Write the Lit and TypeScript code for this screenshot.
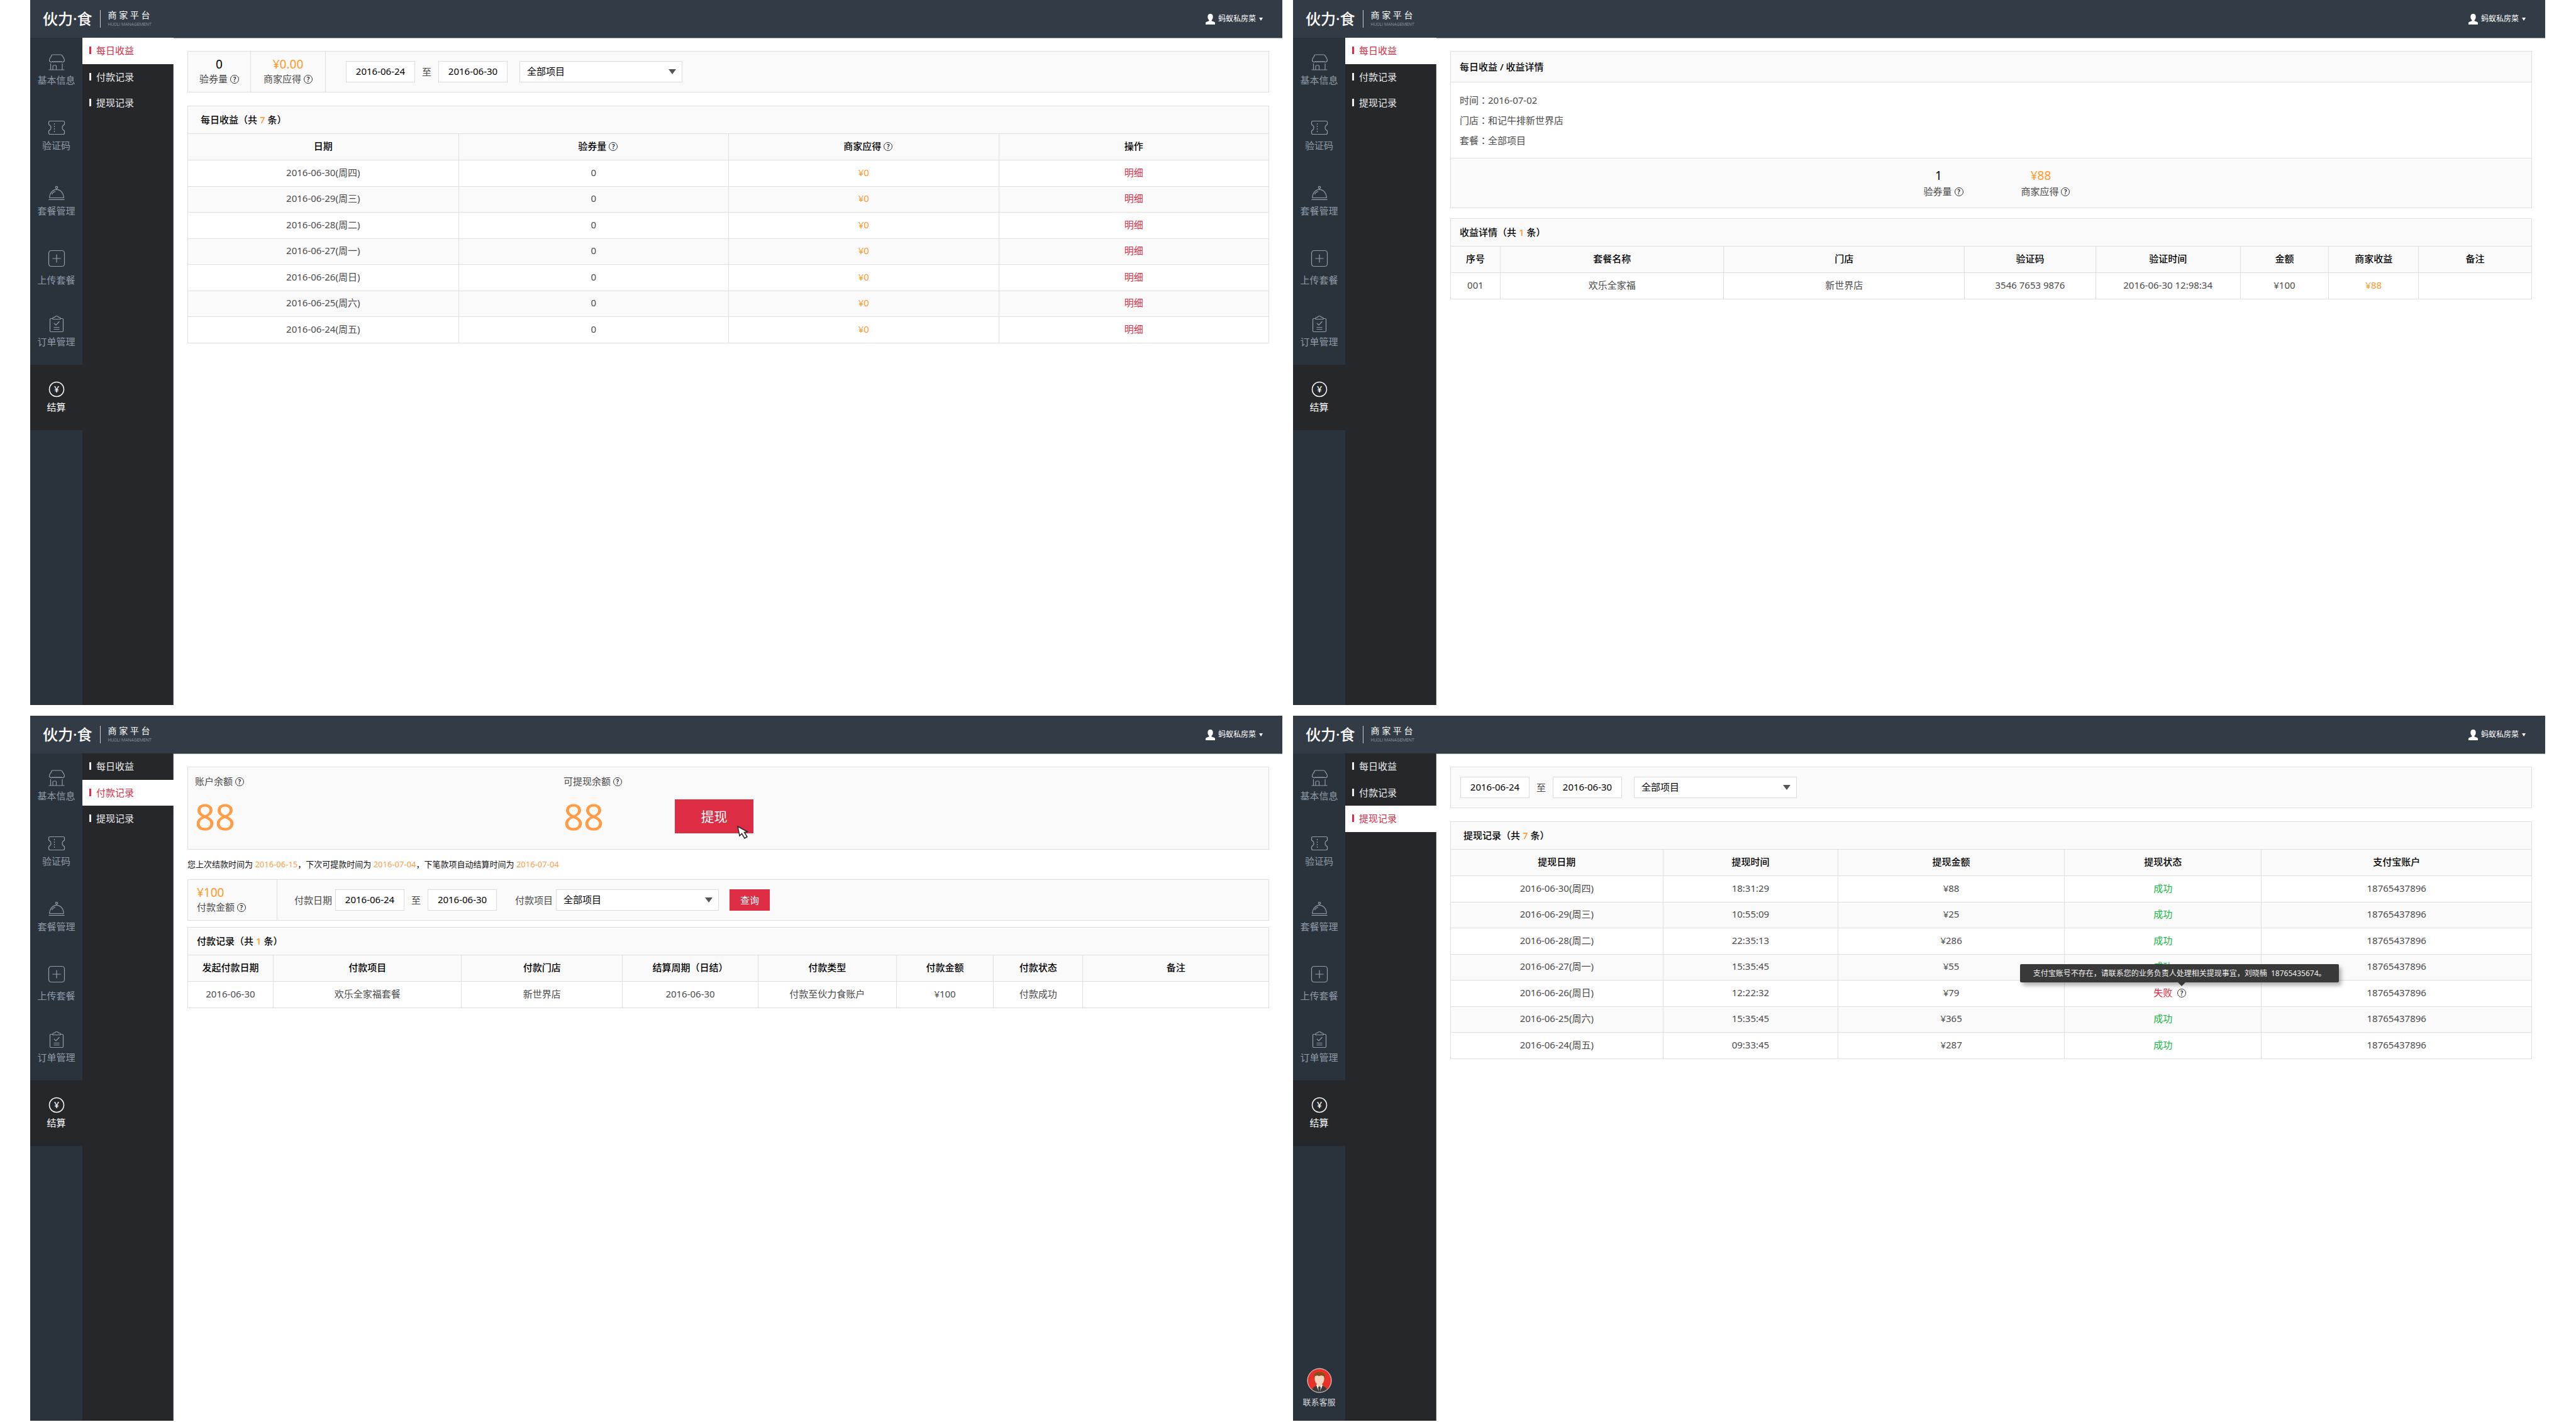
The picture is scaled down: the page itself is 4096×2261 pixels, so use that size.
import { LitElement, html, svg, css, nothing, type TemplateResult } from "lit";
import { customElement, property } from "lit/decorators.js";
import { classMap } from "lit/directives/class-map.js";

type Cell = string | TemplateResult;

interface Column {
  label: Cell;
  weight: number;
}

/* ---------- icons ---------- */

const storeIcon = svg`
  <path d="M7.500 2h13c1 0 1.800.5 2.300 1.400 1.400 2.600 3.700 4.600 3.700 7.100 0 1.700-.9 2.700-2.200 2.900q-1.600.6-2.600-.6-1.500 1.300-2.900 0-1.500 1.300-2.900 0-1.500 1.300-2.900 0-1.500 1.300-2.900 0-1.500 1.300-2.900 0-1.200 1.300-2.600.6c-1.300-.2-2.100-1.200-2.100-2.900 0-2.500 2.300-4.500 3.700-7.100C5.700 2.500 6.500 2 7.500 2z"/>
  <path d="M4.500 16v10M23 16v10M1.500 26h25M8 26v-5.500q0-1.500 1.500-1.500h2.500q1.500 0 1.500 1.500v5.500"/>`;

const ticketIcon = svg`
  <path d="M3.500 3.500h21q2 0 2 2v3.500q-3.500 1.800-3.500 5t3.500 5v3.500q0 2-2 2h-21q-2 0-2-2v-3.500q3.500-1.800 3.500-5t-3.500-5v-3.500q0-2 2-2z"/>
  <path d="M10.500 7v15" stroke-dasharray="2 2"/>`;

const clocheIcon = svg`
  <circle cx="14" cy="5" r="1.700"/>
  <path d="M14 6.700v1.500M2.800 21.500c.2-7.500 4.700-13.200 11.200-13.200s11 5.700 11.200 13.200z"/>
  <path d="M6.500 16c1-2.700 2.900-4.100 5.500-4.600M1.500 24.300h25"/>`;

const plusIcon = svg`
  <rect x="1.500" y="1.500" width="25" height="25" rx="4"/>
  <path d="M14 7.500v13M7.500 14h13"/>`;

const orderIcon = svg`
  <path d="M8 5.500H5q-1.500 0-1.500 1.500v18q0 1.500 1.500 1.500h18q1.500 0 1.500-1.500V7q0-1.500-1.500-1.500h-3"/>
  <path d="M8 6.500v-1.500q0-1.500 1.500-1.500H11q.6-2 3-2t3 2h1.500q1.500 0 1.500 1.500v1.500z"/>
  <path d="M10 13l3 3 5.500-6M9.500 19.500h9M9.500 22.500h9"/>`;

const yuanIcon = svg`
  <circle cx="14" cy="14" r="11.500" stroke-width="1.500"/>
  <text x="14" y="19" text-anchor="middle" font-size="14" font-weight="500" stroke="none" fill="currentColor">¥</text>`;

const agentAvatar = html`
  <svg class="avatar" viewBox="0 0 40 40" aria-hidden="true">
    <defs><clipPath id="face"><circle cx="20" cy="20" r="19" /></clipPath></defs>
    <circle cx="20" cy="20" r="19" fill="#e6332a" />
    <g clip-path="url(#face)">
      <path d="M8 40c0-7 2-9.500 7-11.500h10c5 2 7.500 4.500 7.500 11.500z" fill="#3c3c3b" />
      <path d="M15 27.500l5 12 5-12-2-3h-6z" fill="#fff" />
      <path d="M19 29h2l1 2-1 8h-2l-1-8z" fill="#3c3c3b" />
      <path d="M16.500 23h7v4l-3.500 3-3.500-3z" fill="#eec3a6" />
      <path d="M12.500 12h15v6c0 5-4 9.500-7.500 9.500s-7.500-4.500-7.500-9.500z" fill="#f6d3bb" />
      <path d="M11.500 17c-1.500-7 2-10.500 8.500-10.500s10 3.500 8.500 10.500l-2-4-3.500-1-3.500 1-3-1-3.500 1z" fill="#854f1c" />
    </g>
    <circle cx="20" cy="20" r="19" fill="none" stroke="#f3e9e9" stroke-width="1" />
  </svg>`;

const help = html`<span class="help">?</span>`;
const colon = html`<span class="colon">：</span>`;

/* ---------- page frame ---------- */

const sections = [
  { label: "基本信息", icon: storeIcon },
  { label: "验证码", icon: ticketIcon },
  { label: "套餐管理", icon: clocheIcon },
  { label: "上传套餐", icon: plusIcon, roomy: true },
  { label: "订单管理", icon: orderIcon },
  { label: "结算", icon: yuanIcon, active: true },
];

const pages = ["每日收益", "付款记录", "提现记录"];

@customElement("merchant-shell")
export class MerchantShell extends LitElement {
  @property() current = "";
  @property({ type: Boolean }) support = false;

  static styles = css`
    :host {
      display: flex;
      flex-direction: column;
      min-width: 0;
    }
    a {
      color: inherit;
      text-decoration: none;
    }
    .bar {
      display: flex;
      align-items: center;
      justify-content: space-between;
      height: 60px;
      padding: 0 31px 0 20px;
      box-sizing: border-box;
      background: #333c46;
      color: #fff;
    }
    .brand {
      display: flex;
      align-items: center;
    }
    .logo {
      font-size: 24px;
      line-height: 28px;
      font-weight: 500;
    }
    .tagline {
      display: flex;
      flex-direction: column;
      gap: 3px;
      margin-left: 12px;
      padding-left: 12px;
      border-left: 1px solid #c9cdd1;
    }
    .tag-cn {
      font-size: 14px;
      line-height: 16px;
    }
    .tag-en {
      font-family: Roboto, "Liberation Sans", sans-serif;
      font-weight: 300;
      font-size: 7px;
      line-height: 9px;
      color: #a3aab2;
    }
    .user {
      display: flex;
      align-items: center;
      gap: 5px;
      padding: 0;
      border: 0;
      background: none;
      color: inherit;
      font: inherit;
      font-size: 12px;
      line-height: 18px;
    }
    .user svg {
      width: 15px;
      height: 17px;
    }
    .caret {
      border: 3px solid transparent;
      border-top: 5px solid #fff;
      border-bottom: 0;
    }
    .body {
      flex: 1;
      display: flex;
    }
    .side {
      width: 83px;
      display: flex;
      flex-direction: column;
      background: #2a323c;
      color: #8f9ca9;
    }
    .section {
      display: flex;
      flex-direction: column;
      align-items: center;
      gap: 4px;
      height: 104px;
      padding-top: 25px;
      box-sizing: border-box;
      font-size: 15px;
      line-height: 20px;
    }
    .section.roomy {
      gap: 10px;
    }
    .section.active {
      background: #26272b;
      color: #fff;
    }
    .section svg {
      width: 28px;
      height: 28px;
      fill: none;
      stroke: currentColor;
      stroke-width: 1.2;
    }
    .support {
      display: flex;
      flex-direction: column;
      align-items: center;
      gap: 4px;
      margin-top: auto;
      padding-bottom: 20px;
      font-size: 13px;
      line-height: 20px;
      color: #d5d8dc;
    }
    .avatar {
      width: 40px;
      height: 40px;
    }
    .pages {
      width: 145px;
      box-sizing: border-box;
      background: #26272b;
      color: #eee;
      border-right: 1px solid #55565a;
    }
    .page {
      display: flex;
      align-items: center;
      gap: 8px;
      height: 42px;
      padding: 0 0 2px 11px;
      box-sizing: border-box;
      font-size: 15px;
      line-height: 20px;
    }
    .page:nth-child(even) {
      height: 41px;
    }
    .page::before {
      content: "";
      width: 3px;
      height: 12px;
      background: currentColor;
    }
    .page.active {
      background: #fff;
      color: #dc2d45;
      margin-right: -1px;
    }
    .main {
      flex: 1;
      min-width: 0;
      padding: 20px 21px 0 22px;
      border-top: 1px solid #8f969e;
      background: #fff;
    }
  `;

  render() {
    return html`
      <header class="bar">
        <div class="brand">
          <span class="logo">伙力·食</span>
          <div class="tagline">
            <span class="tag-cn">商 家 平 台</span>
            <span class="tag-en">HUOLI MANAGEMENT</span>
          </div>
        </div>
        <button class="user" type="button">
          <svg viewBox="0 0 15 17" fill="#fff" aria-hidden="true">
            <path d="M7.500 0c2.700 0 4.200 1.900 4.200 4.800 0 2.300-1 4.300-2.200 5.200v1.200l4 1.500c1 .4 1.500 1 1.500 2V17H0v-2.300c0-1 .5-1.600 1.500-2l4-1.500V10C4.300 9.100 3.300 7.100 3.300 4.800 3.300 1.900 4.800 0 7.500 0z" />
          </svg>
          <span>蚂蚁私房菜</span>
          <span class="caret"></span>
        </button>
      </header>
      <div class="body">
        <nav class="side">
          ${sections.map(
            (s) => html`
              <a href="#" class=${classMap({ section: true, active: !!s.active, roomy: !!s.roomy })}>
                <svg viewBox="0 0 28 28" aria-hidden="true">${s.icon}</svg>
                <span>${s.label}</span>
              </a>`
          )}
          ${this.support ? html`<a href="#" class="support">${agentAvatar}<span>联系客服</span></a>` : nothing}
        </nav>
        <nav class="pages">
          ${pages.map(
            (p) => html`<a href="#" class=${classMap({ page: true, active: p === this.current })}>${p}</a>`
          )}
        </nav>
        <main class="main"><slot></slot></main>
      </div>
    `;
  }
}

/* ---------- data ---------- */

const days = [
  "2016-06-30(周四)",
  "2016-06-29(周三)",
  "2016-06-28(周二)",
  "2016-06-27(周一)",
  "2016-06-26(周日)",
  "2016-06-25(周六)",
  "2016-06-24(周五)",
];

const dailyColumns: Column[] = [
  { label: "日期", weight: 430 },
  { label: html`<span class="hinted">验券量 ${help}</span>`, weight: 430 },
  { label: html`<span class="hinted">商家应得 ${help}</span>`, weight: 430 },
  { label: "操作", weight: 430 },
];

const detailColumns: Column[] = [
  { label: "序号", weight: 78 },
  { label: "套餐名称", weight: 356 },
  { label: "门店", weight: 383 },
  { label: "验证码", weight: 209 },
  { label: "验证时间", weight: 230 },
  { label: "金额", weight: 141 },
  { label: "商家收益", weight: 143 },
  { label: "备注", weight: 180 },
];

const paymentColumns: Column[] = [
  { label: "发起付款日期", weight: 135 },
  { label: "付款项目", weight: 300 },
  { label: "付款门店", weight: 256 },
  { label: "结算周期（日结）", weight: 216 },
  { label: "付款类型", weight: 220 },
  { label: "付款金额", weight: 155 },
  { label: "付款状态", weight: 142 },
  { label: "备注", weight: 296 },
];

const withdrawColumns: Column[] = [
  { label: "提现日期", weight: 337 },
  { label: "提现时间", weight: 279 },
  { label: "提现金额", weight: 360 },
  { label: "提现状态", weight: 314 },
  { label: "支付宝账户", weight: 430 },
];

const withdrawals = [
  { time: "18:31:29", amount: "¥88", ok: true },
  { time: "10:55:09", amount: "¥25", ok: true },
  { time: "22:35:13", amount: "¥286", ok: true },
  { time: "15:35:45", amount: "¥55", ok: true },
  { time: "12:22:32", amount: "¥79", ok: false },
  { time: "15:35:45", amount: "¥365", ok: true },
  { time: "09:33:45", amount: "¥287", ok: true },
];

@customElement("app-root")
export class AppRoot extends LitElement {
  static styles = css`
    :host {
      display: grid;
      grid-template-columns: 1fr 1fr;
      grid-auto-rows: minmax(calc((100vh - 19px) / 2), auto);
      gap: 17px;
      padding: 0 49px 2px 48px;
      background: #fff;
      color: #4a4a4a;
      font-family: "Noto Sans", "Noto Sans CJK SC", sans-serif;
      font-size: 15px;
      line-height: 20px;
    }
    .card {
      border: 1px solid #dfdfdf;
      background: #fafafa;
      margin-bottom: 21px;
    }
    .card.near {
      margin-bottom: 16px;
    }
    .card.close {
      margin-bottom: 10px;
    }
    .card.flush {
      margin-bottom: 0;
    }
    .title {
      margin: 0;
      padding: 0 20px;
      font-size: 15px;
      line-height: 43px;
      font-weight: 500;
      color: #000;
    }
    .title.tight {
      padding: 0 14px;
    }
    .title.tall {
      line-height: 48px;
    }
    .count,
    .money {
      color: #ff9829;
    }
    .link {
      color: #dc2d45;
      text-decoration: none;
    }
    .good {
      color: #12b840;
    }
    .bad {
      position: relative;
      color: #dc2d45;
    }
    .colon {
      font-family: "Noto Sans CJK TC", sans-serif;
    }
    .help {
      display: inline-block;
      width: 14px;
      height: 14px;
      box-sizing: border-box;
      border: 1px solid #333;
      border-radius: 50%;
      color: #222;
      font-size: 10px;
      font-weight: 600;
      line-height: 12px;
      text-align: center;
      vertical-align: 1px;
    }
    .hinted {
      padding-left: 14px;
    }

    /* tables */
    .table {
      width: 100%;
      table-layout: fixed;
      border-collapse: separate;
      border-spacing: 0;
      text-align: center;
    }
    .table th,
    .table td {
      height: 42px;
      box-sizing: border-box;
      padding: 0 0 4px;
      border-top: 1px solid #dfdfdf;
      border-left: 1px solid #dfdfdf;
    }
    .table th:first-child,
    .table td:first-child {
      border-left: 0;
    }
    .table th {
      font-weight: 500;
      color: #000;
    }
    .table tbody tr {
      background: #fff;
    }
    .table tbody tr:nth-child(even) {
      background: #fafafa;
    }
    .table tbody tr:nth-child(even) td {
      height: 41px;
    }

    /* filters */
    .filters {
      display: flex;
      align-items: center;
      min-height: 64px;
    }
    .stat {
      align-self: stretch;
      display: flex;
      flex-direction: column;
      align-items: center;
      justify-content: center;
      gap: 2px;
      width: 119px;
      padding-bottom: 2px;
      box-sizing: border-box;
      border-right: 1px solid #dfdfdf;
    }
    .stat.narrow {
      width: 100px;
    }
    .stat.left {
      width: 142px;
      padding-left: 14px;
      align-items: flex-start;
    }
    .value {
      font-size: 19px;
      line-height: 22px;
      color: #000;
    }
    .value.money {
      color: #ff9829;
    }
    .range {
      display: flex;
      align-items: center;
      gap: 11px;
      padding-left: 15px;
    }
    .range.after-stats {
      padding-left: 32px;
    }
    .range.labelled {
      padding: 0 2px 0 5px;
    }
    .field-label {
      padding-left: 27px;
    }
    .date,
    .picker select {
      height: 34px;
      box-sizing: border-box;
      border: 1px solid #dcdcdc;
      border-radius: 0;
      background: #fff;
      color: #000;
      font: inherit;
    }
    .date {
      width: 110px;
      padding: 0 0 2px;
      text-align: center;
    }
    .picker {
      display: grid;
      align-items: center;
      width: 259px;
      margin-left: 19px;
    }
    .picker.labelled {
      margin-left: 5px;
    }
    .picker select {
      grid-area: 1 / 1;
      width: 100%;
      padding: 0 11px 2px;
      appearance: none;
    }
    .picker::after {
      content: "";
      grid-area: 1 / 1;
      justify-self: end;
      margin-right: 10px;
      border: 6px solid transparent;
      border-top: 8px solid #555;
      border-bottom: 0;
      pointer-events: none;
    }
    .action {
      border: 0;
      padding: 0;
      background: #dc2d45;
      color: #fff;
      font: inherit;
    }
    .query {
      width: 64px;
      height: 34px;
      margin-left: 17px;
    }

    /* income detail */
    .facts {
      margin: 0;
      padding: 12px 14px;
      list-style: none;
      line-height: 32px;
      background: #fff;
      border: 1px solid #dfdfdf;
      border-width: 1px 0;
    }
    .totals {
      display: flex;
      justify-content: center;
      gap: 92px;
      padding: 15px 0 16px 18px;
    }
    .total {
      display: flex;
      flex-direction: column;
      align-items: center;
      gap: 3px;
    }
    .total .value {
      padding-right: 15px;
      line-height: 24px;
    }

    /* balance */
    .balance {
      display: flex;
      padding: 12px 11px 15px;
    }
    .account {
      width: 586px;
    }
    .caption {
      display: block;
      height: 20px;
    }
    .amount {
      display: flex;
      align-items: center;
      gap: 113px;
      height: 74px;
      margin-top: 9px;
    }
    .figure {
      font-size: 56px;
      line-height: 74px;
      color: #ff9c45;
    }
    .withdraw {
      position: relative;
      width: 125px;
      height: 54px;
      font-size: 21px;
    }
    .cursor {
      position: absolute;
      left: 98px;
      top: 42px;
      width: 20px;
      height: 22px;
    }
    .notice {
      margin: 0;
      font-size: 13px;
      line-height: 47px;
      color: #111;
    }
    .when {
      color: #ff9c45;
    }

    /* failure tooltip */
    .why {
      position: absolute;
      left: 38px;
      top: 0;
      line-height: 20px;
    }
    .tip {
      position: absolute;
      right: -243px;
      bottom: 26px;
      width: 507px;
      border-radius: 2px;
      background: #393939;
      color: #f2f2f2;
      box-shadow: 4px 5px 6px rgba(0, 0, 0, 0.3);
      font-size: 12px;
      line-height: 29px;
      text-align: center;
      white-space: pre;
    }
    .tip::after {
      content: "";
      position: absolute;
      right: 244px;
      top: 100%;
      border: 6px solid transparent;
      border-top-color: #393939;
      border-bottom: 0;
    }
  `;

  private table(columns: Column[], rows: Cell[][]) {
    const sum = columns.reduce((n, c) => n + c.weight, 0);
    return html`
      <table class="table">
        <colgroup>
          ${columns.map((c) => html`<col style="width:${(c.weight / sum) * 100}%" />`)}
        </colgroup>
        <thead>
          <tr>${columns.map((c) => html`<th scope="col">${c.label}</th>`)}</tr>
        </thead>
        <tbody>
          ${rows.map((r) => html`<tr>${r.map((c) => html`<td>${c}</td>`)}</tr>`)}
        </tbody>
      </table>`;
  }

  private range(kind: string, id: string) {
    return html`
      <div class="range ${kind}">
        <input class="date" id="${id}-from" type="text" aria-label="开始日期" value="2016-06-24" />
        <span>至</span>
        <input class="date" type="text" aria-label="结束日期" value="2016-06-30" />
      </div>`;
  }

  private picker(kind: string, id: string) {
    return html`
      <div class="picker ${kind}">
        <select id="${id}-item" aria-label="项目"><option>全部项目</option></select>
      </div>`;
  }

  private heading(text: string, count: number, kind = "") {
    return html`<h2 class="title ${kind}">${text}（共 <span class="count">${count}</span> 条）</h2>`;
  }

  private daily() {
    return html`
      <merchant-shell current="每日收益">
        <section class="card filters">
          <div class="stat narrow"><span class="value">0</span><span class="caption">验券量 ${help}</span></div>
          <div class="stat"><span class="value money">¥0.00</span><span class="caption">商家应得 ${help}</span></div>
          ${this.range("after-stats", "daily")} ${this.picker("", "daily")}
        </section>
        <section class="card flush">
          ${this.heading("每日收益", 7)}
          ${this.table(
            dailyColumns,
            days.map((d) => [
              d,
              "0",
              html`<span class="money">¥0</span>`,
              html`<a class="link" href="#">明细</a>`,
            ])
          )}
        </section>
      </merchant-shell>`;
  }

  private detail() {
    return html`
      <merchant-shell current="每日收益">
        <section class="card near">
          <h2 class="title tight tall">每日收益 / 收益详情</h2>
          <ul class="facts">
            <li>时间${colon}2016-07-02</li>
            <li>门店${colon}和记牛排新世界店</li>
            <li>套餐${colon}全部项目</li>
          </ul>
          <div class="totals">
            <div class="total"><span class="value">1</span><span class="caption">验券量 ${help}</span></div>
            <div class="total"><span class="value money">¥88</span><span class="caption">商家应得 ${help}</span></div>
          </div>
        </section>
        <section class="card flush">
          ${this.heading("收益详情", 1, "tight")}
          ${this.table(detailColumns, [
            [
              "001",
              "欢乐全家福",
              "新世界店",
              "3546 7653 9876",
              "2016-06-30 12:98:34",
              "¥100",
              html`<span class="money">¥88</span>`,
              "",
            ],
          ])}
        </section>
      </merchant-shell>`;
  }

  private payments() {
    return html`
      <merchant-shell current="付款记录">
        <section class="card balance flush">
          <div class="account">
            <span class="caption">账户余额 ${help}</span>
            <div class="amount"><span class="figure">88</span></div>
          </div>
          <div>
            <span class="caption">可提现余额 ${help}</span>
            <div class="amount">
              <span class="figure">88</span>
              <button class="action withdraw" type="button">
                提现
                <svg class="cursor" viewBox="0 0 20 22" fill="#fff" stroke="#26272b" stroke-width="1.500" aria-hidden="true">
                  <path d="M2 1l3 15 3.500-3.500 4.500 7.500 4-2.500-4.500-7 5-1z" />
                </svg>
              </button>
            </div>
          </div>
        </section>
        <p class="notice">您上次结款时间为 <span class="when">2016-06-15</span>，下次可提款时间为 <span class="when">2016-07-04</span>，下笔款项自动结算时间为 <span class="when">2016-07-04</span></p>
        <section class="card filters close">
          <div class="stat left"><span class="value money">¥100</span><span class="caption">付款金额 ${help}</span></div>
          <label class="field-label" for="pay-from">付款日期</label>
          ${this.range("labelled", "pay")}
          <label class="field-label" for="pay-item">付款项目</label>
          ${this.picker("labelled", "pay")}
          <button class="action query" type="button">查询</button>
        </section>
        <section class="card flush">
          ${this.heading("付款记录", 1, "tight")}
          ${this.table(paymentColumns, [
            ["2016-06-30", "欢乐全家福套餐", "新世界店", "2016-06-30", "付款至伙力食账户", "¥100", "付款成功", ""],
          ])}
        </section>
      </merchant-shell>`;
  }

  private withdraws() {
    const failed = html`<span class="bad">失败<span class="why">${help}<span class="tip" role="tooltip">支付宝账号不存在，请联系您的业务负责人处理相关提现事宜，刘晓楠  18765435674。</span></span></span>`;
    return html`
      <merchant-shell current="提现记录" support>
        <section class="card filters">
          ${this.range("", "withdraw")} ${this.picker("", "withdraw")}
        </section>
        <section class="card flush">
          ${this.heading("提现记录", 7)}
          ${this.table(
            withdrawColumns,
            withdrawals.map((w, i) => [
              days[i],
              w.time,
              w.amount,
              w.ok ? html`<span class="good">成功</span>` : failed,
              "18765437896",
            ])
          )}
        </section>
      </merchant-shell>`;
  }

  render() {
    return html`${this.daily()}${this.detail()}${this.payments()}${this.withdraws()}`;
  }
}
